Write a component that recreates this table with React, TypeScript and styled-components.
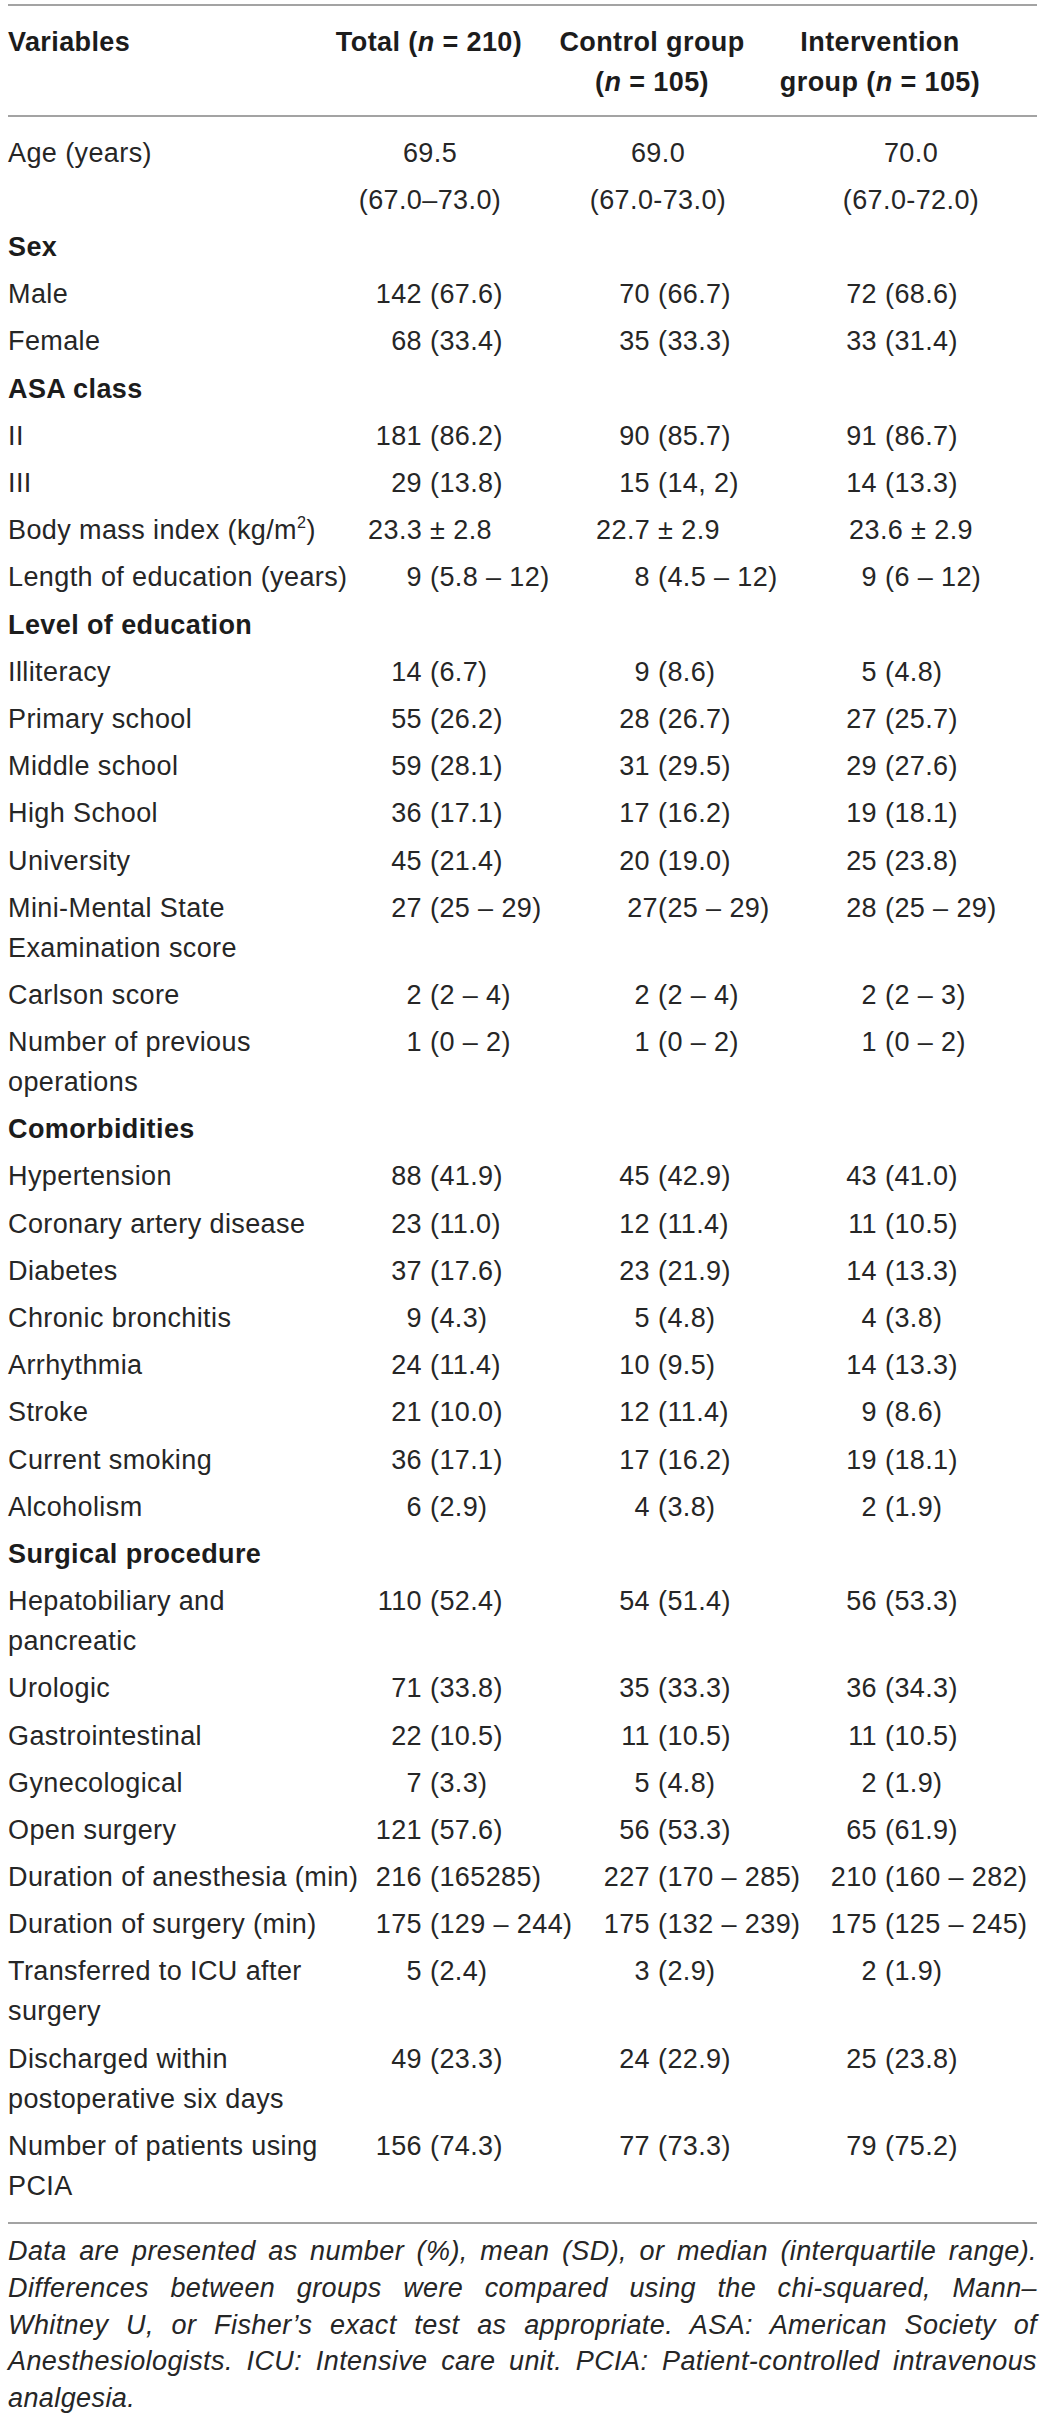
import React from "react";
import styled, { createGlobalStyle } from "styled-components";

const GlobalStyle = createGlobalStyle`
  html, body { margin: 0; padding: 0; background: #ffffff; }
  body {
    font-family: "Liberation Sans", Arial, Helvetica, sans-serif;
    color: #262626;
  }
`;

const COLS = "362px 228px 228px 1fr";
const SPLIT = [60, 60, 59];
const CENTER = [60, 60, 85];
const HEAD_CENTER = [59, 54, 54];

const Page = styled.main`
  padding: 4px 8px 0;
  font-size: 27px;
  letter-spacing: 0.4px;
`;

const Table = styled.section`
  border-top: 2px solid #a3a3a3;
  border-bottom: 2px solid #a3a3a3;
`;

const HeaderRow = styled.div`
  display: grid;
  grid-template-columns: ${COLS};
  padding: 16px 0 13px;
  border-bottom: 2px solid #a3a3a3;
  line-height: 40px;
  font-weight: 700;
  color: #1c1c1c;
`;

const Body = styled.div`
  padding: 12.5px 0 12.5px;
`;

const Row = styled.div<{ $tall?: boolean }>`
  display: grid;
  grid-template-columns: ${COLS};
  align-items: start;
  padding: ${(p) => (p.$tall ? "0" : "3.6px 0")};
  line-height: ${(p) => (p.$tall ? "47px" : "40px")};
`;

const Label = styled.div<{ $section?: boolean }>`
  white-space: nowrap;
  font-weight: ${(p) => (p.$section ? 700 : 400)};
  color: ${(p) => (p.$section ? "#1c1c1c" : "inherit")};
`;

const Centered = styled.div<{ $at: number }>`
  display: flex;
  flex-direction: column;
  align-items: center;
  width: 0;
  margin-left: ${(p) => p.$at}px;
  white-space: nowrap;
`;

const Split = styled.div<{ $at: number }>`
  display: grid;
  grid-template-columns: ${(p) => p.$at}px max-content;
  white-space: nowrap;
`;

const Pre = styled.span<{ $gap: boolean }>`
  text-align: right;
  padding-right: ${(p) => (p.$gap ? 8 : 0)}px;
`;

const Rest = styled.span`
  text-align: left;
`;

const Em = styled.i`
  font-style: italic;
`;

const Sup = styled.sup`
  font-size: 0.6em;
  line-height: 0;
  vertical-align: 0.65em;
`;

const Footnote = styled.div`
  padding-top: 9.5px;
  line-height: 36.6px;
  font-style: italic;
`;

const FootLine = styled.div<{ $last?: boolean }>`
  text-align: ${(p) => (p.$last ? "left" : "justify")};
  text-align-last: ${(p) => (p.$last ? "left" : "justify")};
  white-space: nowrap;
`;

type Value = string | { c: string[] };
type RowData =
  | { section: string }
  | { label: React.ReactNode[]; vals: Value[]; tall?: boolean };

const rows: RowData[] = [
  {
    label: ["Age (years)"],
    tall: true,
    vals: [
      { c: ["69.5", "(67.0–73.0)"] },
      { c: ["69.0", "(67.0-73.0)"] },
      { c: ["70.0", "(67.0-72.0)"] },
    ],
  },
  { section: "Sex" },
  { label: ["Male"], vals: ["142 (67.6)", "70 (66.7)", "72 (68.6)"] },
  { label: ["Female"], vals: ["68 (33.4)", "35 (33.3)", "33 (31.4)"] },
  { section: "ASA class" },
  { label: ["II"], vals: ["181 (86.2)", "90 (85.7)", "91 (86.7)"] },
  { label: ["III"], vals: ["29 (13.8)", "15 (14, 2)", "14 (13.3)"] },
  {
    label: [
      <React.Fragment key="bmi">
        Body mass index (kg/m<Sup>2</Sup>)
      </React.Fragment>,
    ],
    vals: [{ c: ["23.3 ± 2.8"] }, { c: ["22.7 ± 2.9"] }, { c: ["23.6 ± 2.9"] }],
  },
  {
    label: ["Length of education (years)"],
    vals: ["9 (5.8 – 12)", "8 (4.5 – 12)", "9 (6 – 12)"],
  },
  { section: "Level of education" },
  { label: ["Illiteracy"], vals: ["14 (6.7)", "9 (8.6)", "5 (4.8)"] },
  { label: ["Primary school"], vals: ["55 (26.2)", "28 (26.7)", "27 (25.7)"] },
  { label: ["Middle school"], vals: ["59 (28.1)", "31 (29.5)", "29 (27.6)"] },
  { label: ["High School"], vals: ["36 (17.1)", "17 (16.2)", "19 (18.1)"] },
  { label: ["University"], vals: ["45 (21.4)", "20 (19.0)", "25 (23.8)"] },
  {
    label: ["Mini-Mental State", "Examination score"],
    vals: ["27 (25 – 29)", "27(25 – 29)", "28 (25 – 29)"],
  },
  { label: ["Carlson score"], vals: ["2 (2 – 4)", "2 (2 – 4)", "2 (2 – 3)"] },
  {
    label: ["Number of previous", "operations"],
    vals: ["1 (0 – 2)", "1 (0 – 2)", "1 (0 – 2)"],
  },
  { section: "Comorbidities" },
  { label: ["Hypertension"], vals: ["88 (41.9)", "45 (42.9)", "43 (41.0)"] },
  {
    label: ["Coronary artery disease"],
    vals: ["23 (11.0)", "12 (11.4)", "11 (10.5)"],
  },
  { label: ["Diabetes"], vals: ["37 (17.6)", "23 (21.9)", "14 (13.3)"] },
  { label: ["Chronic bronchitis"], vals: ["9 (4.3)", "5 (4.8)", "4 (3.8)"] },
  { label: ["Arrhythmia"], vals: ["24 (11.4)", "10 (9.5)", "14 (13.3)"] },
  { label: ["Stroke"], vals: ["21 (10.0)", "12 (11.4)", "9 (8.6)"] },
  { label: ["Current smoking"], vals: ["36 (17.1)", "17 (16.2)", "19 (18.1)"] },
  { label: ["Alcoholism"], vals: ["6 (2.9)", "4 (3.8)", "2 (1.9)"] },
  { section: "Surgical procedure" },
  {
    label: ["Hepatobiliary and", "pancreatic"],
    vals: ["110 (52.4)", "54 (51.4)", "56 (53.3)"],
  },
  { label: ["Urologic"], vals: ["71 (33.8)", "35 (33.3)", "36 (34.3)"] },
  { label: ["Gastrointestinal"], vals: ["22 (10.5)", "11 (10.5)", "11 (10.5)"] },
  { label: ["Gynecological"], vals: ["7 (3.3)", "5 (4.8)", "2 (1.9)"] },
  { label: ["Open surgery"], vals: ["121 (57.6)", "56 (53.3)", "65 (61.9)"] },
  {
    label: ["Duration of anesthesia (min)"],
    vals: ["216 (165285)", "227 (170 – 285)", "210 (160 – 282)"],
  },
  {
    label: ["Duration of surgery (min)"],
    vals: ["175 (129 – 244)", "175 (132 – 239)", "175 (125 – 245)"],
  },
  {
    label: ["Transferred to ICU after", "surgery"],
    vals: ["5 (2.4)", "3 (2.9)", "2 (1.9)"],
  },
  {
    label: ["Discharged within", "postoperative six days"],
    vals: ["49 (23.3)", "24 (22.9)", "25 (23.8)"],
  },
  {
    label: ["Number of patients using", "PCIA"],
    vals: ["156 (74.3)", "77 (73.3)", "79 (75.2)"],
  },
];

const footLines = [
  "Data are presented as number (%), mean (SD), or median (interquartile range).",
  "Differences between groups were compared using the chi-squared, Mann–",
  "Whitney U, or Fisher’s exact test as appropriate. ASA: American Society of",
  "Anesthesiologists. ICU: Intensive care unit. PCIA: Patient-controlled intravenous",
  "analgesia.",
];

function ValueCell({ value, col }: { value: Value; col: number }) {
  if (typeof value !== "string") {
    return (
      <Centered $at={CENTER[col]}>
        {value.c.map((line) => (
          <span key={line}>{line}</span>
        ))}
      </Centered>
    );
  }
  const m = value.match(/^(\S+?)(\s?)(\(.*)$/);
  const pre = m ? m[1] : value;
  const gap = m ? m[2].length > 0 : false;
  const rest = m ? m[3] : "";
  return (
    <Split $at={SPLIT[col]}>
      <Pre $gap={gap}>{pre}</Pre>
      <Rest>{rest}</Rest>
    </Split>
  );
}

export default function App() {
  return (
    <>
      <GlobalStyle />
      <Page>
        <Table>
          <HeaderRow>
            <Label $section>Variables</Label>
            <Centered $at={HEAD_CENTER[0]}>
              <span>
                Total (<Em>n</Em> = 210)
              </span>
            </Centered>
            <Centered $at={HEAD_CENTER[1]}>
              <span>Control group</span>
              <span>
                (<Em>n</Em> = 105)
              </span>
            </Centered>
            <Centered $at={HEAD_CENTER[2]}>
              <span>Intervention</span>
              <span>
                group (<Em>n</Em> = 105)
              </span>
            </Centered>
          </HeaderRow>
          <Body>
            {rows.map((r, i) =>
              "section" in r ? (
                <Row key={i}>
                  <Label $section>{r.section}</Label>
                </Row>
              ) : (
                <Row key={i} $tall={r.tall}>
                  <Label>
                    {r.label.map((l, j) => (
                      <React.Fragment key={j}>
                        {j > 0 && <br />}
                        {l}
                      </React.Fragment>
                    ))}
                  </Label>
                  {r.vals.map((v, c) => (
                    <ValueCell key={c} value={v} col={c} />
                  ))}
                </Row>
              )
            )}
          </Body>
        </Table>
        <Footnote>
          {footLines.map((l, i) => (
            <FootLine key={i} $last={i === footLines.length - 1}>
              {l}
            </FootLine>
          ))}
        </Footnote>
      </Page>
    </>
  );
}
